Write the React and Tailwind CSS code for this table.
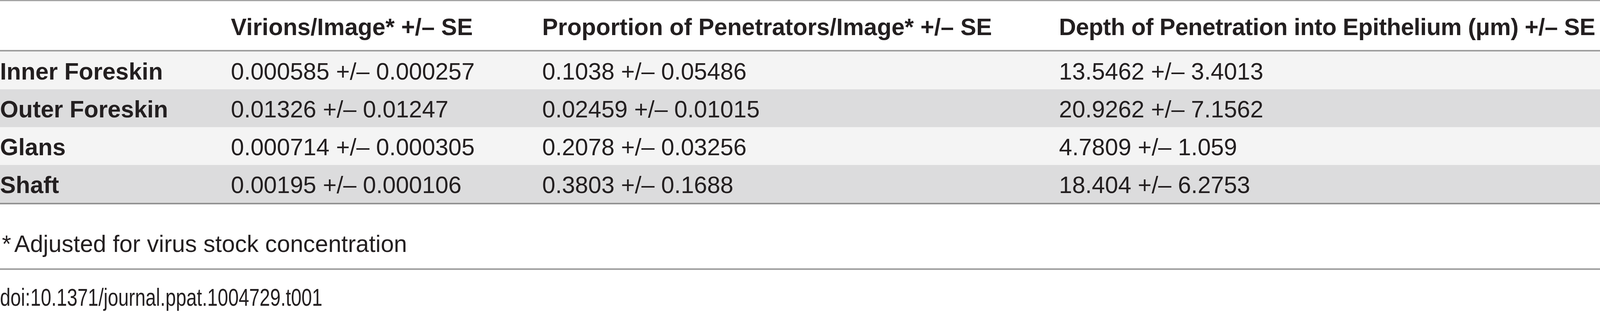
const rows = [
  {
    site: "Inner Foreskin",
    virions: "0.000585 +/– 0.000257",
    proportion: "0.1038 +/– 0.05486",
    depth: "13.5462 +/– 3.4013",
  },
  {
    site: "Outer Foreskin",
    virions: "0.01326 +/– 0.01247",
    proportion: "0.02459 +/– 0.01015",
    depth: "20.9262 +/– 7.1562",
  },
  {
    site: "Glans",
    virions: "0.000714 +/– 0.000305",
    proportion: "0.2078 +/– 0.03256",
    depth: "4.7809 +/– 1.059",
  },
  {
    site: "Shaft",
    virions: "0.00195 +/– 0.000106",
    proportion: "0.3803 +/– 0.1688",
    depth: "18.404 +/– 6.2753",
  },
];

const cols = "grid grid-cols-[591px_797px_1323px_minmax(0,1fr)] items-center";

export default function App() {
  return (
    <div className="w-full h-[800px] overflow-hidden bg-white text-[#231f20] font-['Liberation_Sans',Arial,sans-serif] text-[60.5px] leading-[68px]">
      <div className="border-t-[3px] border-[#a3a3a3]">
        <div className={`${cols} h-[125px] font-bold pt-[6px] whitespace-nowrap`}>
          <div />
          <div>Virions/Image* +/– SE</div>
          <div>Proportion of Penetrators/Image* +/– SE</div>
          <div className="tracking-[-0.5px]">Depth of Penetration into Epithelium (μm) +/– SE</div>
        </div>
        <div className="border-t-4 border-[#9e9e9e]">
          {rows.map((row, i) => (
            <div
              key={row.site}
              className={`${cols} h-[97px] pt-[4px] whitespace-nowrap ${
                i % 2 === 0 ? "bg-[#f4f4f4]" : "bg-[#dcdcdd]"
              }`}
            >
              <div className="font-bold">{row.site}</div>
              <div>{row.virions}</div>
              <div>{row.proportion}</div>
              <div>{row.depth}</div>
            </div>
          ))}
        </div>
      </div>
      <div className="border-t-4 border-[#939393] h-[168px] pt-[67px] pl-[5px] whitespace-nowrap">
        <span>*</span>
        <span className="pl-[8px]">Adjusted for virus stock concentration</span>
      </div>
      <div className="border-t-4 border-[#9e9e9e] pt-[40px]">
        <div className="origin-left scale-x-[0.765] text-[63px] leading-[60px] whitespace-nowrap">
          doi:10.1371/journal.ppat.1004729.t001
        </div>
      </div>
    </div>
  );
}
